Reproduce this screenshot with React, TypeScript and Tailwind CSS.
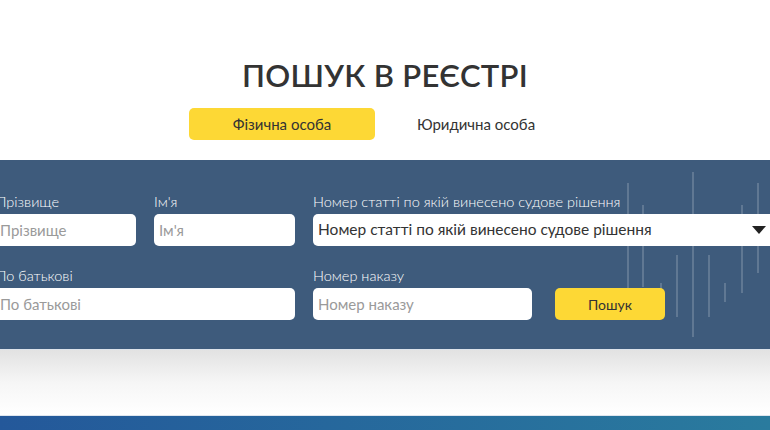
import React from "react";

const lines: [number, number, number][] = [
  [628, 183, 295],
  [643, 205, 287],
  [661, 283, 300],
  [677, 255, 317],
  [693, 172, 337],
  [709, 255, 317],
  [725, 283, 302],
  [742, 205, 293],
  [758, 183, 273],
];

export default function App() {
  return (
    <div
      className="w-[770px] h-[430px] overflow-hidden bg-white relative"
      style={{ fontFamily: "Lato, 'Open Sans', sans-serif" }}
    >
      <div className="h-[52px]" />
      <h1 className="text-center text-[31px] leading-[46px] font-semibold tracking-[0.3px] text-[#333333]">
        ПОШУК В РЕЄСТРІ
      </h1>
      <div className="flex justify-center gap-2 mt-[10px] ml-[-12px]">
        <button className="w-[186px] h-[32px] rounded-[5px] bg-[#fdd835] text-[15px] text-[#333]">
          Фізична особа
        </button>
        <button className="w-[186px] h-[32px] rounded-[5px] text-[15px] text-[#333]">
          Юридична особа
        </button>
      </div>
      <div className="mt-[20px] h-[189px] bg-[#3e5b7c] relative overflow-hidden">
        <svg className="absolute left-0 top-0" width="770" height="189" viewBox="0 160 770 189">
          {lines.map(([x, y1, y2]) => (
            <line key={x} x1={x} x2={x} y1={y1} y2={y2} stroke="rgba(255,255,255,0.18)" strokeWidth="2" />
          ))}
        </svg>
        <div className="relative ml-[-4px] pt-[34px] flex flex-col gap-[22px] text-white">
          <div className="flex gap-[18px]">
            <div className="w-[140px] shrink-0 flex flex-col gap-[4px]">
              <span className="text-[14.5px] leading-[16px] font-light">Прізвище</span>
              <div className="h-[32px] rounded-[5px] bg-white px-[4px] flex items-center text-[15px] text-[#9a9a9a]">
                Прізвище
              </div>
            </div>
            <div className="w-[141px] shrink-0 flex flex-col gap-[4px]">
              <span className="text-[14.5px] leading-[16px] font-light">Ім'я</span>
              <div className="h-[32px] rounded-[5px] bg-white px-[5px] flex items-center text-[15px] text-[#9a9a9a]">
                Ім'я
              </div>
            </div>
            <div className="w-[470px] shrink-0 flex flex-col gap-[4px]">
              <span className="text-[14.5px] leading-[16px] font-light">
                Номер статті по якій винесено судове рішення
              </span>
              <div className="h-[32px] rounded-[5px] bg-white pl-[5px] pr-[17px] flex items-center justify-between text-[15.5px] text-[#333]">
                <span>Номер статті по якій винесено судове рішення</span>
                <svg width="14" height="8" viewBox="0 0 14 8">
                  <path d="M0 0 H14 L7 8 Z" fill="#222" />
                </svg>
              </div>
            </div>
          </div>
          <div className="flex gap-[18px] items-end">
            <div className="w-[299px] shrink-0 flex flex-col gap-[4px]">
              <span className="text-[14.5px] leading-[16px] font-light">По батькові</span>
              <div className="h-[32px] rounded-[5px] bg-white px-[4px] flex items-center text-[15px] text-[#9a9a9a]">
                По батькові
              </div>
            </div>
            <div className="w-[219px] shrink-0 flex flex-col gap-[4px]">
              <span className="text-[14.5px] leading-[16px] font-light">Номер наказу</span>
              <div className="h-[32px] rounded-[5px] bg-white px-[5px] flex items-center text-[15px] text-[#9a9a9a]">
                Номер наказу
              </div>
            </div>
            <button className="ml-[5px] shrink-0 w-[110px] h-[32px] rounded-[5px] bg-[#fdd835] text-[14px] text-[#333]">
              Пошук
            </button>
          </div>
        </div>
      </div>
      <div className="h-[66px] bg-gradient-to-b from-[#e2e2e2] via-[#f6f6f6] to-white border-t border-[#dde3ea]" />
      <div className="h-[1px] bg-[#dfe6ee]" />
      <div className="h-[20px] bg-gradient-to-r from-[#24589a] to-[#2a7b9e]" />
    </div>
  );
}
